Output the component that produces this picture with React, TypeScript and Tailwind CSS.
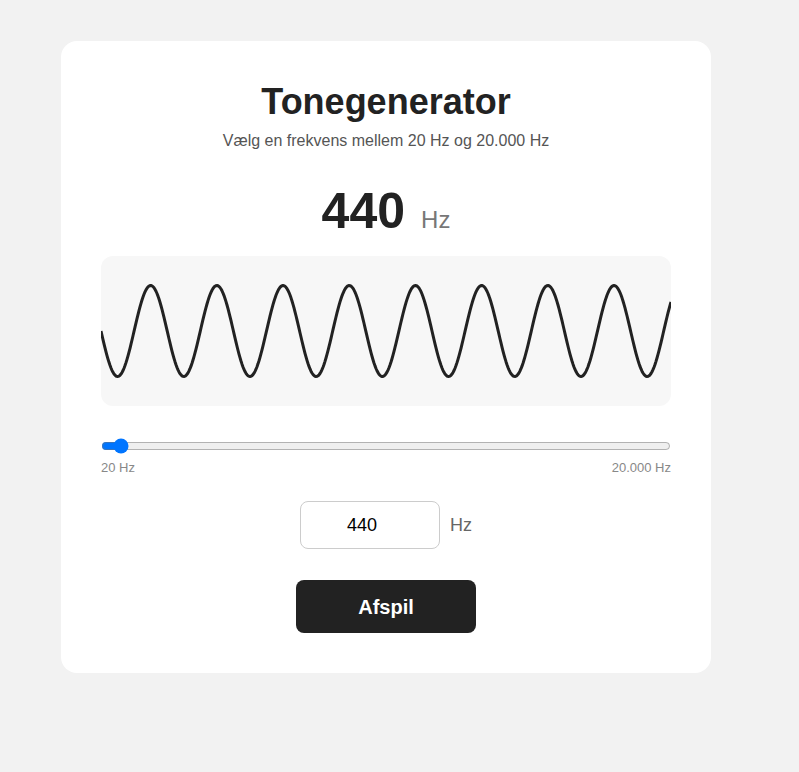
import { useMemo, useState } from "react";

const WAVE_W = 570;
const WAVE_H = 150;
const PERIOD = 66.2;
const AMP = 45.5;

function wavePath(width: number, height: number) {
  const mid = height / 2;
  const parts: string[] = [];
  for (let x = 0; x <= width; x += 1) {
    const y = mid + AMP * Math.sin((2 * Math.PI * x) / PERIOD);
    parts.push(`${x === 0 ? "M" : "L"}${x} ${y.toFixed(2)}`);
  }
  return parts.join(" ");
}

export default function App() {
  const [freq, setFreq] = useState(440);
  const path = useMemo(() => wavePath(WAVE_W, WAVE_H), []);

  return (
    <div className="min-h-screen bg-[#f2f2f2] pl-[61px] pt-[41px] font-['Liberation_Sans',Arial,sans-serif]">
      <div className="flex w-[650px] flex-col items-center rounded-2xl bg-white px-10 pt-10 pb-10 text-center">
        <h1 className="text-[36px] leading-[42px] font-bold text-[#222]">Tonegenerator</h1>
        <p className="mt-[6px] text-[16px] leading-[24px] text-[#555]">
          Vælg en frekvens mellem 20 Hz og 20.000 Hz
        </p>

        <div className="mt-[33px] flex items-baseline">
          <span className="text-[50px] leading-none font-bold text-[#222]">{freq}</span>
          <span className="ml-4 text-[24px] leading-none text-[#777]">Hz</span>
        </div>

        <div className="mt-5 h-[150px] w-full overflow-hidden rounded-xl bg-[#f7f7f7]">
          <svg width={WAVE_W} height={WAVE_H} viewBox={`0 0 ${WAVE_W} ${WAVE_H}`} className="block">
            <path d={path} fill="none" stroke="#222" strokeWidth={3} strokeLinejoin="round" />
          </svg>
        </div>

        <input
          type="range"
          min={20}
          max={20000}
          value={freq}
          onChange={(e) => setFreq(Number(e.target.value))}
          className="m-0 mt-8 block h-4 w-full"
        />
        <div className="mt-1.5 flex w-full justify-between text-[13px] leading-[16px] text-[#888]">
          <span>20 Hz</span>
          <span>20.000 Hz</span>
        </div>

        <div className="mt-[25px] flex items-center">
          <input
            type="number"
            value={freq}
            onChange={(e) => setFreq(Number(e.target.value))}
            className="h-12 w-[140px] rounded-lg border border-[#ccc] bg-white pr-4 text-center text-[18px] text-black outline-none [appearance:textfield] [&::-webkit-inner-spin-button]:appearance-none"
          />
          <span className="ml-[10px] text-[18px] text-[#666]">Hz</span>
        </div>

        <button
          type="button"
          className="mt-[31px] h-[53px] w-[180px] rounded-lg bg-[#222] text-[20px] font-bold text-white"
        >
          Afspil
        </button>
      </div>
    </div>
  );
}
